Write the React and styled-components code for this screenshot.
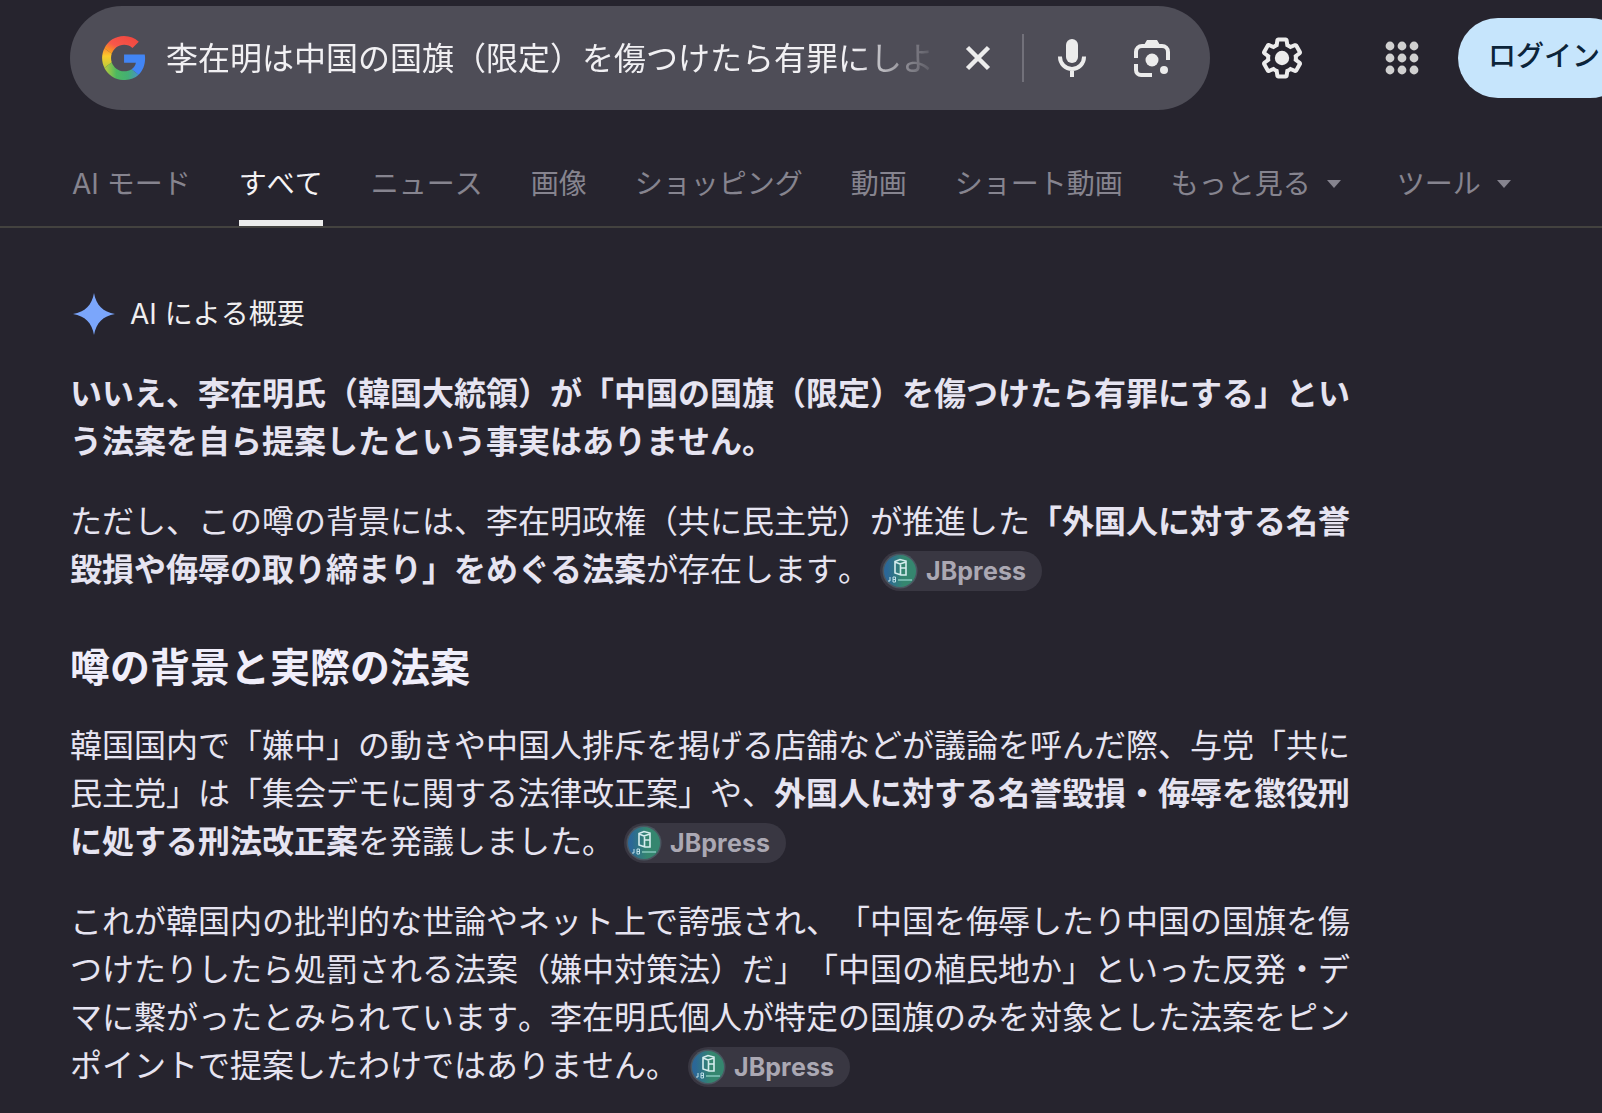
import React, { useState } from "react";
import styled, { createGlobalStyle } from "styled-components";

const Global = createGlobalStyle`
  * { box-sizing: border-box; }
  body {
    margin: 0;
    min-height: 100vh;
    overflow-x: hidden;
    background: #26242e;
    color: #e6e4f1;
    font-family: Inter, "Noto Sans CJK JP", sans-serif;
    font-kerning: none;
    text-spacing-trim: space-all;
  }
  button { font: inherit; color: inherit; border: 0; padding: 0; background: none; cursor: pointer; }
  svg { flex: none; }
`;

const Header = styled.header`
  display: flex;
  align-items: center;
  padding: 6px 0 0 70px;
  overflow: hidden;
`;

const SearchForm = styled.form`
  display: flex;
  align-items: center;
  flex: 1;
  min-width: 0;
  height: 104px;
  padding: 0 38px 0 32px;
  border-radius: 52px;
  background: #4e4d57;
`;

const SearchInput = styled.input`
  flex: 1;
  min-width: 0;
  height: 56px;
  margin: 0 32px 0 20px;
  padding: 0 0 4px;
  border: 0;
  outline: 0;
  background: transparent;
  color: #f1f0f3;
  font: 32px/52px "Noto Sans CJK JP", sans-serif;
  font-kerning: none;
  mask-image: linear-gradient(to right, #000 calc(100% - 76px), rgba(0, 0, 0, 0.1));
`;

const IconButton = styled.button`
  display: flex;
  align-items: center;
  justify-content: center;
  flex: none;
  width: ${(p) => p.$size || 40}px;
  height: 48px;
  color: #ececec;
`;

const Divider = styled.span`
  width: 2px;
  height: 48px;
  margin: 0 28px;
  background: #72717a;
`;

const SearchActions = styled.div`
  display: flex;
  align-items: center;
  gap: 40px;
`;

const HeaderActions = styled.div`
  display: flex;
  align-items: center;
  flex: none;
  gap: 80px;
  margin: 0 36px 0 52px;
`;

const LoginButton = styled.button`
  && {
    flex: none;
    height: 80px;
    margin-right: -28px;
    padding: 0 30px 8px;
    border-radius: 40px;
    background: #c6e5fc;
    color: #0c2439;
    font: 500 28px/40px "Noto Sans CJK JP", sans-serif;
    font-kerning: none;
  }
`;

const Tabs = styled.nav`
  display: flex;
  gap: 48px;
  margin-top: 38px;
  padding-left: 72px;
  border-bottom: 2px solid #43423f;
  overflow: hidden;
`;

const tabText = `
  display: flex;
  align-items: center;
  flex: none;
  gap: 16px;
  height: 78px;
  font-size: 28px;
  line-height: 40px;
  white-space: nowrap;
`;

const Tab = styled.a`
  ${tabText}
  color: ${(p) => (p.$active ? "#f4f3f5" : "#86848f")};
  border-bottom: 6px solid ${(p) => (p.$active ? "#ececec" : "transparent")};
  text-decoration: none;
`;

const MenuTab = styled.button`
  && {
    ${tabText}
    padding: 0 8px 6px 0;
    color: #86848f;
  }
`;

const Caret = styled.span`
  border: 7px solid transparent;
  border-top: 8px solid #86848f;
  border-bottom: 0;
`;

const Overview = styled.main`
  max-width: 1364px;
  padding: 64px 0 24px 70px;
`;

const OverviewLabel = styled.div`
  display: flex;
  align-items: center;
  gap: 14px;
  height: 44px;
  margin-bottom: 34px;
  padding-left: 2px;
  color: #f0eff0;
  font-size: 28px;
  line-height: 40px;
`;

const Paragraph = styled.p`
  margin: 0 0 32px;
  font-size: 32px;
  line-height: 48px;
`;

const Strong = styled.strong`
  font-weight: 700;
`;

const Heading = styled.h2`
  margin: 48px 0 28px;
  color: #f0eefa;
  font-size: 40px;
  line-height: 52px;
  font-weight: 700;
`;

const Chip = styled.button`
  && {
    display: inline-flex;
    align-items: center;
    gap: 8px;
    height: 40px;
    margin: 0 0 2px 10px;
    padding: 0 16px 0 2px;
    border-radius: 20px;
    background: #393742;
    color: #aba8b3;
    font-size: 25px;
    font-weight: 700;
    line-height: 40px;
    vertical-align: middle;
  }
`;

function GoogleLogo() {
  return (
    <svg width="44" height="44" viewBox="2 2 44 44" aria-label="Google" role="img">
      <defs>
        <linearGradient id="gr" x1="0" y1="1" x2="1" y2="0">
          <stop offset="0" stopColor="#fbbc04" /><stop offset=".4" stopColor="#f6574b" /><stop offset="1" stopColor="#f0443c" />
        </linearGradient>
        <linearGradient id="gy" x1="0" y1="0" x2="0" y2="1">
          <stop offset="0" stopColor="#f98a33" /><stop offset=".4" stopColor="#fbcb2b" /><stop offset="1" stopColor="#b9cb3c" />
        </linearGradient>
        <linearGradient id="gg" x1="0" y1="0" x2="1" y2="0">
          <stop offset="0" stopColor="#b9cb3c" /><stop offset=".35" stopColor="#4db860" /><stop offset=".7" stopColor="#43ae75" /><stop offset="1" stopColor="#4793c8" />
        </linearGradient>
      </defs>
      <g transform="translate(2.1 2.1) scale(.915)">
        <path fill="url(#gr)" d="M24 9.500c3.540 0 6.710 1.220 9.210 3.600l6.850-6.850C35.900 2.380 30.470 0 24 0 14.620 0 6.510 5.380 2.560 13.220l7.980 6.190C12.430 13.720 17.740 9.500 24 9.500z" />
        <path fill="#4285f4" d="M46.980 24.550c0-1.570-.15-3.090-.38-4.550H24v9.020h12.940c-.58 2.960-2.260 5.480-4.780 7.180l7.730 6c4.510-4.180 7.090-10.360 7.090-17.650z" />
        <path fill="url(#gy)" d="M10.530 28.590c-.48-1.450-.76-2.990-.76-4.590s.27-3.140.76-4.590l-7.980-6.190C.92 16.460 0 20.120 0 24c0 3.880.92 7.540 2.560 10.780l7.970-6.190z" />
        <path fill="url(#gg)" d="M24 48c6.480 0 11.930-2.130 15.890-5.810l-7.730-6c-2.150 1.450-4.920 2.300-8.160 2.300-6.260 0-11.570-4.220-13.470-9.910l-7.980 6.190C6.510 42.620 14.620 48 24 48z" />
      </g>
    </svg>
  );
}

const CloseIcon = () => (
  <svg width="28" height="28" viewBox="0 0 28 28" stroke="currentColor" strokeWidth="4.500" aria-hidden="true">
    <path d="M3.500 3.500l21 21M24.500 3.500l-21 21" />
  </svg>
);

const MicIcon = () => (
  <svg width="40" height="40" viewBox="0 0 40 40" fill="none" aria-hidden="true">
    <rect x="14" y="1" width="12" height="24" rx="6" fill="currentColor" />
    <path d="M8 18.500v.5a12 12 0 0 0 24 0v-.5M20 31v8" stroke="currentColor" strokeWidth="4" />
  </svg>
);

const LensIcon = () => (
  <svg width="40" height="40" viewBox="0 0 40 40" fill="none" aria-hidden="true">
    <path d="M4 20v-6a6 6 0 0 1 6-6h20a6 6 0 0 1 6 6v8M4 26v6a5 5 0 0 0 5 5h11" stroke="currentColor" strokeWidth="4" />
    <path d="M12 7l3-5h10l3 5z" fill="currentColor" />
    <circle cx="20" cy="22" r="6.500" fill="currentColor" />
    <circle cx="32" cy="32" r="4" fill="currentColor" />
  </svg>
);

const GearIcon = () => (
  <svg width="48" height="48" viewBox="0 0 24 24" fill="currentColor" aria-hidden="true">
    <path d="M13.850 22.250h-3.700c-.74 0-1.360-.54-1.450-1.270l-.27-1.890c-.27-.14-.53-.29-.79-.46l-1.800.72c-.7.260-1.470-.03-1.810-.65L2.200 15.530c-.35-.66-.2-1.440.36-1.880l1.530-1.190c-.01-.15-.02-.3-.02-.46 0-.15.010-.31.020-.46l-1.520-1.190c-.59-.45-.74-1.260-.37-1.880l1.850-3.190c.34-.62 1.110-.9 1.790-.63l1.810.73c.26-.17.52-.32.78-.46l.27-1.910c.09-.7.710-1.250 1.440-1.250h3.700c.74 0 1.360.54 1.450 1.270l.27 1.890c.27.140.53.290.79.460l1.800-.72c.71-.26 1.480.030 1.820.650l1.840 3.180c.36.660.200 1.440-.36 1.880l-1.520 1.190c.010.150.020.300.020.460s-.010.310-.020.460l1.520 1.190c.56.450.720 1.230.370 1.860l-1.860 3.220c-.34.620-1.110.900-1.800.630l-1.800-.72c-.26.170-.52.320-.78.460l-.27 1.910c-.1.680-.72 1.220-1.460 1.220zm-3.230-2h2.760l.37-2.550.53-.22c.44-.18.88-.44 1.340-.78l.45-.34 2.380.960 1.380-2.400-2.030-1.580.070-.56c.030-.26.060-.51.060-.78s-.030-.53-.06-.78l-.07-.56 2.030-1.580-1.390-2.400-2.390.960-.45-.35c-.42-.32-.87-.58-1.330-.77l-.52-.22-.37-2.550h-2.760l-.37 2.550-.53.210c-.44.190-.88.440-1.340.790l-.45.330-2.380-.95-1.390 2.390 2.030 1.580-.07.560a7 7 0 0 0-.06.790c0 .26.020.530.060.78l.07.560-2.030 1.580 1.380 2.400 2.390-.96.450.350c.43.330.86.580 1.330.770l.53.220z" />
    <circle cx="12" cy="12" r="3.600" />
  </svg>
);

const dots = [8, 20, 32];
const AppsIcon = () => (
  <svg width="40" height="40" viewBox="0 0 40 40" fill="#d0d0d0" aria-hidden="true">
    {dots.map((y) => dots.map((x) => <circle key={`${x}-${y}`} cx={x} cy={y} r="4.400" />))}
  </svg>
);

const Sparkle = () => (
  <svg width="44" height="44" viewBox="0 0 44 44" aria-hidden="true">
    <path d="M22 1c2 12 9 19 21 21-12 2-19 9-21 21-2-12-9-19-21-21 12-2 19-9 21-21z" fill="#7ba6fb" />
  </svg>
);

const SourceIcon = () => (
  <svg width="36" height="36" viewBox="0 0 36 36" aria-hidden="true">
    <defs>
      <linearGradient id="jb"><stop offset=".1" stopColor="#2b6797" /><stop offset=".6" stopColor="#35866f" /></linearGradient>
    </defs>
    <circle cx="18" cy="18" r="17.500" fill="#4a5660" />
    <circle cx="18" cy="18" r="16" fill="url(#jb)" />
    <path d="M13 8.500l5-2 6 1.500v14h-5l-6-2zM13 9l5 2 6-2M18.500 11v11M19 15h5" fill="none" stroke="#d5edee" strokeWidth="1.600" />
    <path d="M8 24v4h-2M11 24v5M11 24h2.500v5H11M11 26.500h2.500" fill="none" stroke="#bfe0e8" strokeWidth="1" />
    <path d="M16 27h14" fill="none" stroke="#6fb5a8" strokeWidth="2" />
  </svg>
);

const Source = () => (
  <Chip type="button">
    <SourceIcon />
    JBpress
  </Chip>
);

const tabs = ["AI モード", "すべて", "ニュース", "画像", "ショッピング", "動画", "ショート動画"];
const menus = ["もっと見る", "ツール"];

export default function App() {
  const [query, setQuery] = useState("李在明は中国の国旗（限定）を傷つけたら有罪にしよ");
  return (
    <>
      <Global />
      <Header>
        <SearchForm role="search" onSubmit={(e) => e.preventDefault()}>
          <GoogleLogo />
          <SearchInput aria-label="検索" value={query} onChange={(e) => setQuery(e.target.value)} />
          <IconButton type="button" $size={32} aria-label="クリア" onClick={() => setQuery("")}>
            <CloseIcon />
          </IconButton>
          <Divider />
          <SearchActions>
            <IconButton type="button" aria-label="音声検索"><MicIcon /></IconButton>
            <IconButton type="button" aria-label="画像で検索"><LensIcon /></IconButton>
          </SearchActions>
        </SearchForm>
        <HeaderActions>
          <IconButton type="button" aria-label="設定"><GearIcon /></IconButton>
          <IconButton type="button" aria-label="アプリ"><AppsIcon /></IconButton>
        </HeaderActions>
        <LoginButton type="button">ログイン</LoginButton>
      </Header>
      <Tabs aria-label="検索の種類">
        {tabs.map((label) => (
          <Tab key={label} href="#" $active={label === "すべて"}>{label}</Tab>
        ))}
        {menus.map((label) => (
          <MenuTab key={label} type="button">{label}<Caret /></MenuTab>
        ))}
      </Tabs>
      <Overview>
        <OverviewLabel><Sparkle />AI による概要</OverviewLabel>
        <Paragraph>
          <Strong>いいえ、李在明氏（韓国大統領）が「中国の国旗（限定）を傷つけたら有罪にする」という法案を自ら提案したという事実はありません。</Strong>
        </Paragraph>
        <Paragraph>
          ただし、この噂の背景には、李在明政権（共に民主党）が推進した<Strong>「外国人に対する名誉毀損や侮辱の取り締まり」をめぐる法案</Strong>が存在します。<Source />
        </Paragraph>
        <Heading>噂の背景と実際の法案</Heading>
        <Paragraph>
          韓国国内で「嫌中」の動きや中国人排斥を掲げる店舗などが議論を呼んだ際、与党「共に民主党」は「集会デモに関する法律改正案」や、<Strong>外国人に対する名誉毀損・侮辱を懲役刑に処する刑法改正案</Strong>を発議しました。<Source />
        </Paragraph>
        <Paragraph>
          これが韓国内の批判的な世論やネット上で誇張され、「中国を侮辱したり中国の国旗を傷つけたりしたら処罰される法案（嫌中対策法）だ」「中国の植民地か」といった反発・デマに繋がったとみられています。李在明氏個人が特定の国旗のみを対象とした法案をピンポイントで提案したわけではありません。<Source />
        </Paragraph>
      </Overview>
    </>
  );
}
